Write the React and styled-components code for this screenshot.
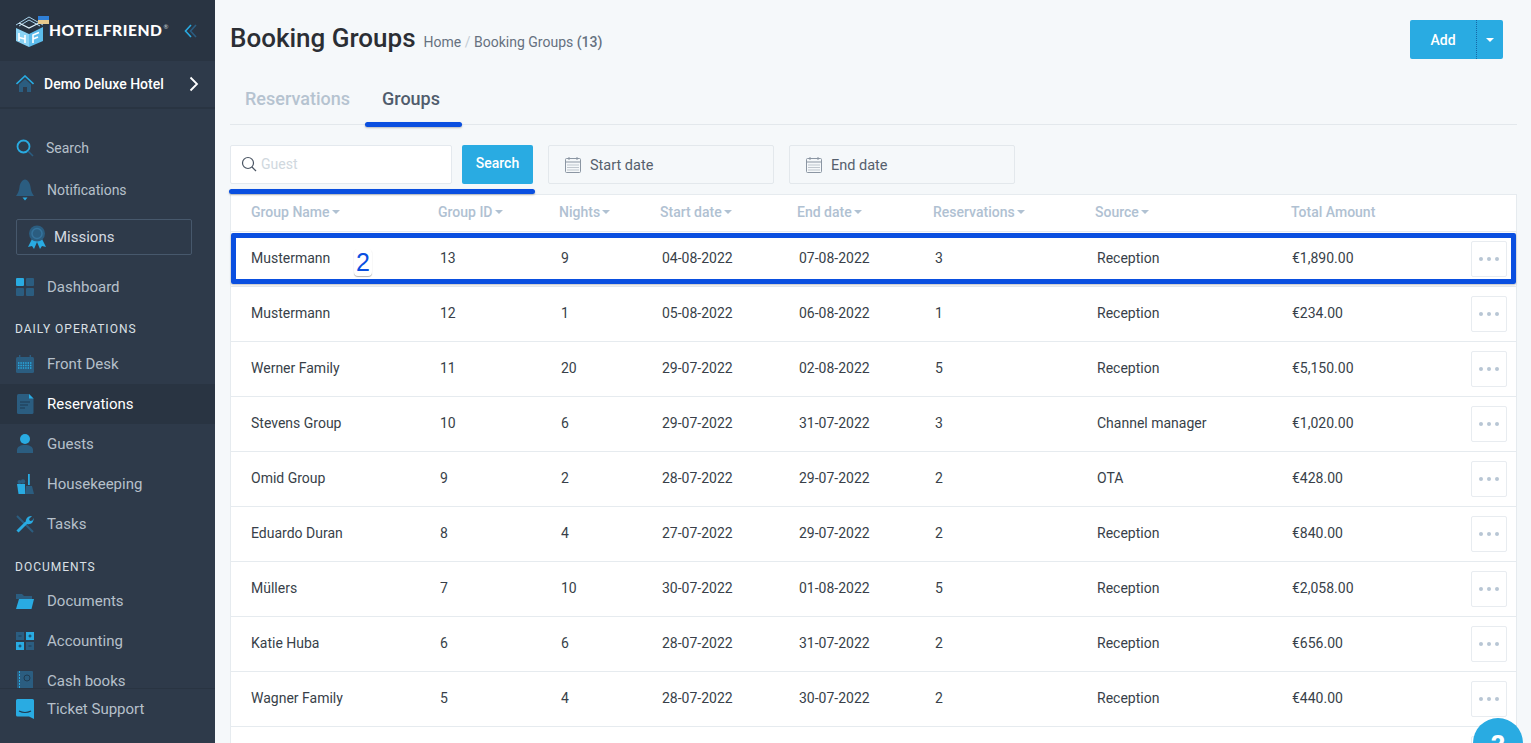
import React from 'react'
import styled, { createGlobalStyle } from 'styled-components'

const bright = '#29abe2'
const dim = '#2b5d80'

const GlobalStyle = createGlobalStyle`
    html, body {
        margin: 0;
        height: 743px;
        overflow: hidden;
        font-family: Roboto, 'Liberation Sans', sans-serif;
        background: #f5f8fa;
    }
    * { box-sizing: border-box; }
`

const Page = styled.div`
    display: flex;
    width: 1531px;
    height: 743px;
    overflow: hidden;
`

const Sidebar = styled.aside`
    width: 215px;
    flex: none;
    height: 743px;
    display: flex;
    flex-direction: column;
    background: #2e3a4a;
`

const LogoBar = styled.div`
    height: 61px;
    flex: none;
    display: flex;
    align-items: center;
    padding: 0 0 0 15px;
    background: #293442;
`

const LogoText = styled.div`
    margin-top: -2px;
    color: #fff;
    font-family: Lato, sans-serif;
    font-weight: 900;
    font-size: 15.6px;
    letter-spacing: 0.55px;
    sup { font-size: 6px; font-weight: 400; vertical-align: 7px; color: #c8d0d8; margin-left: 1px; line-height: 0; }
`

const Collapse = styled.div`
    margin-left: 15px;
    display: flex;
`

const HotelRow = styled.div`
    height: 48px;
    flex: none;
    display: flex;
    align-items: center;
    padding: 0 16px 0 16px;
    border-bottom: 2px solid #293442;
    color: #fff;
    font-size: 14px;
    font-weight: 500;
    span { margin-left: 10px; flex: 1; }
`

const Nav = styled.nav`
    flex: 1;
    min-height: 0;
    overflow: hidden;
    padding-top: 19px;
`

const NavItem = styled.div`
    height: 40px;
    display: flex;
    align-items: center;
    padding-left: 16px;
    gap: ${p => p.$gap || 13}px;
    margin-top: ${p => p.$mt || 0}px;
    font-size: ${p => p.$small ? 14 : 15}px;
    color: ${p => (p.$active ? '#ffffff' : '#b6c0ca')};
    background: ${p => (p.$active ? '#293442' : 'transparent')};
`

const IconSlot = styled.span`
    width: 18px;
    height: 20px;
    flex: none;
    display: flex;
    align-items: center;
    justify-content: center;
`

const MissionBox = styled.div`
    margin: 9px 23px 12px 16px;
    height: 36px;
    border: 1px solid #47586c;
    border-radius: 2px;
    display: flex;
    align-items: center;
    padding-left: 10px;
    gap: 7px;
    color: #d5dbe1;
    font-size: 15px;
`

const SectionLabel = styled.div`
    height: 37px;
    padding-top: ${p => p.$top}px;
    padding-left: 15px;
    color: #dbe0e6;
    font-size: 12px;
    line-height: 14px;
    letter-spacing: 1px;
    text-transform: uppercase;
`

const SideFooter = styled.div`
    height: 55px;
    flex: none;
    overflow: hidden;
    border-top: 1px solid #293442;
`

const Main = styled.main`
    flex: 1;
    min-width: 0;
    position: relative;
    padding: 0 14px 0 15px;
`

const TopBar = styled.div`
    height: 78px;
    display: flex;
    align-items: flex-start;
    padding-top: 20px;
`

const Title = styled.h1`
    margin: 0;
    font-size: 26px;
    line-height: 36px;
    font-weight: 500;
    color: #2b2e34;
`

const Crumbs = styled.div`
    margin-left: 8px;
    padding-top: 7px;
    font-size: 14px;
    line-height: 30px;
    color: #667180;
    i { font-style: normal; color: #c3ccd4; margin: 0 3.5px; }
    b { font-weight: 500; }
`

const AddGroup = styled.div`
    margin-left: auto;
    width: 93px;
    height: 39px;
    display: flex;
    background: ${bright};
    border-radius: 2px;
    color: #fff;
    font-size: 14px;
    font-weight: 500;
    margin-right: 14px;
`

const AddLabel = styled.div`
    width: 67px;
    display: flex;
    align-items: center;
    justify-content: center;
    border-right: 1px dotted #1668a8;
`

const AddCaret = styled.div`
    flex: 1;
    display: flex;
    align-items: center;
    justify-content: center;
`

const Caret = styled.span`
    display: inline-block;
    width: 0;
    height: 0;
    margin-left: ${p => p.$ml || 0}px;
    border-left: ${p => p.$size || 4}px solid transparent;
    border-right: ${p => p.$size || 4}px solid transparent;
    border-top: ${p => p.$size || 4}px solid ${p => p.$color || '#fff'};
`

const Tabs = styled.div`
    height: 47px;
    display: flex;
    gap: 32px;
    padding-left: 15px;
    border-bottom: 1px solid #e3e8ec;
`

const Tab = styled.div`
    font-size: 18px;
    font-weight: 500;
    line-height: 42px;
    color: ${p => (p.$active ? '#505c6c' : '#b5c3d0')};
`

const Filters = styled.div`
    display: flex;
    height: 39px;
    margin-top: 20px;
`

const SearchField = styled.div`
    width: 222px;
    display: flex;
    align-items: center;
    gap: 4px;
    padding: 0 0 2px 10px;
    background: #fff;
    border: 1px solid #e4e9ee;
    border-radius: 2px;
    color: #d0d8de;
    font-size: 14px;
`

const SearchButton = styled.div`
    width: 71px;
    margin-left: 10px;
    background: ${bright};
    border-radius: 2px;
    color: #fff;
    font-size: 14px;
    font-weight: 500;
    display: flex;
    align-items: center;
    justify-content: center;
    padding-bottom: 3px;
`

const DateField = styled.div`
    width: 226px;
    margin-left: ${p => p.$ml}px;
    display: flex;
    align-items: center;
    gap: 9px;
    padding: 1px 0 0 16px;
    border: 1px solid #e3e8ec;
    border-radius: 2px;
    color: #55606d;
    font-size: 14.5px;
`

const Table = styled.div`
    margin-top: 10px;
    background: #fff;
    border: 1px solid #e6ebef;
    border-bottom: none;
`

const gridColumns = '187px 121px 101px 137px 136px 162px 196px 1fr auto'

const HeadRow = styled.div`
    display: grid;
    grid-template-columns: ${gridColumns};
    height: 37px;
    align-items: center;
    padding-bottom: 3px;
    border-bottom: 1px solid #e6ebef;
    color: #b0c1d2;
    font-size: 14px;
    font-weight: 500;
`

const HeadCell = styled.div`
    padding-left: 20px;
    display: flex;
    align-items: center;
`

const Row = styled.div`
    display: grid;
    grid-template-columns: ${gridColumns};
    height: 55px;
    align-items: center;
    border-bottom: 1px solid #e6ebef;
    color: #383f49;
    font-size: 14px;
`

const Cell = styled.div`
    padding-left: ${p => p.$pad}px;
    padding-bottom: 2px;
`

const MoreButton = styled.div`
    grid-column: 9;
    margin-right: 9px;
    width: 36px;
    height: 36px;
    display: flex;
    align-items: center;
    justify-content: center;
    gap: 4px;
    border: 1px solid #e8ecf0;
    border-radius: 2px;
    span { width: 4px; height: 4px; border-radius: 50%; background: #b8c6d4; }
`

// blue marks somebody drew on top of the screenshot
const Mark = styled.div`
    position: absolute;
    left: ${p => p.$x}px;
    top: ${p => p.$y}px;
    width: ${p => p.$w}px;
    height: 5px;
    background: #0a4fe0;
    border-radius: 3px;
    box-shadow: 0 1px 2px rgba(0, 0, 0, 0.25);
`

const MarkBox = styled.div`
    position: absolute;
    left: 16px;
    top: 233px;
    width: 1285px;
    height: 51px;
    border: 5px solid #0a4fe0;
    border-radius: 2px;
    box-shadow: 0 1px 2px rgba(0, 0, 0, 0.25);
`

const MarkNumber = styled.div`
    position: absolute;
    left: 139px;
    top: 249px;
    width: 18px;
    height: 27px;
    text-align: center;
    font-family: 'Liberation Sans', sans-serif;
    font-size: 25px;
    line-height: 26px;
    color: #0a4fe0;
    background: #fff;
    border-radius: 4px;
    box-shadow: 0 1px 1px rgba(0, 0, 0, 0.3);
`

const HelpBubble = styled.div`
    position: absolute;
    left: 1258px;
    top: 718px;
    width: 50px;
    height: 50px;
    border-radius: 50%;
    background: ${bright};
    color: #fff;
    font-size: 28px;
    font-weight: 700;
    text-align: center;
    line-height: 56px;
`

const LogoIcon = () => (
    <svg width="34" height="34" viewBox="0 0 34 34">
        <path d="M1 11 L14 3 L28 11" fill="none" stroke="#a9d3ec" strokeWidth="1" />
        <path d="M4 12 L14 6 L25 12" fill="none" stroke="#a9d3ec" strokeWidth="1" />
        <path d="M1 14 L14 20 V33 L1 27 Z" fill="#8ad3f5" />
        <path d="M28 13 V27 L14 33 V20 Z" fill="#5cbcec" />
        <path d="M4 9 L14 14 L24 9" fill="none" stroke="#dff1fb" strokeWidth="1.2" />
        <path d="M4 19 V27 M10 21 V29 M4 23.5 L10 25" stroke="#fff" strokeWidth="1.6" fill="none" />
        <path d="M18 29 V21 L24 18.5 M18 25 L23 23" stroke="#fff" strokeWidth="1.6" fill="none" />
        <rect x="23" y="2" width="11" height="4" fill="#2f7fd6" />
        <rect x="23" y="6" width="11" height="4" fill="#e8c98c" />
    </svg>
)

const CollapseIcon = () => (
    <svg width="14" height="14" viewBox="0 0 14 14" fill="none" strokeWidth="1.6">
        <path d="M7 1 L1.5 7 L7 13" stroke={bright} />
        <path d="M12 1 L6.5 7 L12 13" stroke={dim} />
    </svg>
)

const HomeIcon = () => (
    <svg width="18" height="18" viewBox="0 0 18 18">
        <path d="M0.5 9 L9 1 L17.5 9" fill="none" stroke={bright} strokeWidth="1.6" />
        <path d="M3 9.5 L9 4 L15 9.5 V17 H11 V12 H7 V17 H3 Z" fill={dim} />
    </svg>
)

const ChevronIcon = () => (
    <svg width="10" height="16" viewBox="0 0 10 16">
        <path d="M1.5 1.5 L8 8 L1.5 14.5" fill="none" stroke="#fff" strokeWidth="1.8" />
    </svg>
)

const SearchIcon = () => (
    <svg width="18" height="18" viewBox="0 0 18 18" fill="none">
        <circle cx="7.5" cy="7.5" r="6" stroke={bright} strokeWidth="1.8" />
        <path d="M12 12 L17 17" stroke={dim} strokeWidth="1.6" />
    </svg>
)

const BellIcon = () => (
    <svg width="18" height="23" viewBox="0 0 18 23">
        <path d="M9 0.5 C6 1 4 4 3.5 8 C3 12 2 14 0 17 H18 C16 14 15 12 14.5 8 C14 4 12 1 9 0.5 Z" fill={dim} />
        <path d="M6.5 18.5 H11.5 L9 21.5 Z" fill={bright} />
    </svg>
)

const RibbonIcon = () => (
    <svg width="20" height="26" viewBox="0 0 20 26" fill="none">
        <path d="M5 15 L1 23 L5 22 L7 25 L10 18 L13 25 L15 22 L19 23 L15 15 Z" fill={bright} />
        <circle cx="10" cy="9.5" r="8" fill={dim} />
        <circle cx="10" cy="9.5" r="5" stroke="#35739c" strokeWidth="1.5" />
    </svg>
)

const DashboardIcon = () => (
    <svg width="18" height="18" viewBox="0 0 18 18">
        <rect width="8" height="8" rx="1" fill={bright} />
        <rect x="10" width="8" height="8" rx="1" fill={dim} />
        <rect y="10" width="8" height="8" rx="1" fill={dim} />
        <rect x="10" y="10" width="8" height="8" rx="1" fill={dim} />
    </svg>
)

const FrontDeskIcon = () => (
    <svg width="18" height="18" viewBox="0 0 18 18">
        <rect y="2" width="18" height="16" rx="1.5" fill={dim} />
        <rect x="3" width="1.4" height="4" fill={dim} />
        <rect x="13.6" width="1.4" height="4" fill={dim} />
        <path d="M2 8 H16 M2 10.5 H16 M2 13 H16" stroke={bright} strokeWidth="1.3" strokeDasharray="1.4 1" />
    </svg>
)

const ReservationIcon = () => (
    <svg width="17" height="20" viewBox="0 0 17 20">
        <path d="M1.5 0 H12 L16.5 4.5 V18.5 Q16.5 20 15 20 H1.5 Q0 20 0 18.5 V1.5 Q0 0 1.5 0 Z" fill={dim} />
        <path d="M12 0 L16.5 4.5 H12 Z" fill={bright} />
        <path d="M3 8 H13 M3 11 H11 M3 14 H8" stroke="#1f3b52" strokeWidth="1.2" />
    </svg>
)

const GuestIcon = () => (
    <svg width="16" height="20" viewBox="0 0 16 20">
        <circle cx="8" cy="5" r="5" fill={bright} />
        <path d="M0 19 V16 C0 13 3 11 8 11 C13 11 16 13 16 16 V19 Z" fill={dim} />
    </svg>
)

const BroomIcon = () => (
    <svg width="18" height="20" viewBox="0 0 18 20">
        <rect x="12" y="0" width="1.8" height="11" fill={bright} />
        <path d="M10 12 H16 L18 20 H9 Z" fill={dim} />
        <path d="M1 10 H9 V20 H2.5 Z" fill={bright} />
        <circle cx="3.5" cy="8" r="2" fill={dim} />
        <circle cx="7" cy="7.5" r="2.2" fill={dim} />
    </svg>
)

const WrenchIcon = () => (
    <svg width="18" height="18" viewBox="0 0 18 18" fill="none">
        <path d="M1 1 L17 17" stroke={dim} strokeWidth="2" />
        <path d="M1.5 16.5 L10.5 7.5" stroke={bright} strokeWidth="3" />
        <path d="M10 8 C9 4 12 0.5 16 1 L13 4 L14 6 L16.5 5.5 L17.5 3 C18 7 15 10 11 9 Z" fill={bright} />
    </svg>
)

const FolderIcon = () => (
    <svg width="18" height="17" viewBox="0 0 18 17">
        <path d="M0 1 H6 L8 3 H16 V6 H0 Z" fill={dim} />
        <path d="M3 6 H18 L15.5 16 H0 Z" fill={bright} />
    </svg>
)

const AccountingIcon = () => (
    <svg width="18" height="18" viewBox="0 0 18 18">
        <rect width="8" height="8" fill={dim} />
        <rect x="10" width="8" height="8" fill={bright} />
        <rect y="10" width="8" height="8" fill={bright} />
        <rect x="10" y="10" width="8" height="8" fill={dim} />
        <path d="M2.5 4 H5.5 M14 2.5 V5.5 M12.5 4 H15.5 M4 12.5 V15.5 M2.5 14 H5.5 M12.5 14 H15.5" stroke="#1f3b52" strokeWidth="1" />
    </svg>
)

const CashBookIcon = () => (
    <svg width="16" height="20" viewBox="0 0 16 20">
        <rect width="16" height="20" rx="1" fill={dim} />
        <path d="M2.5 0 V20" stroke={bright} strokeWidth="1" strokeDasharray="2 1" />
        <circle cx="10" cy="7" r="3" fill="none" stroke="#1f3b52" strokeWidth="1" />
    </svg>
)

const SupportIcon = () => (
    <svg width="18" height="20" viewBox="0 0 18 20">
        <path d="M1.5 0 H16.5 Q18 0 18 1.5 V20 L13 17.5 H1.5 Q0 17.5 0 16 V1.5 Q0 0 1.5 0 Z" fill={bright} />
        <path d="M3 12 Q9 15 15 12" fill="none" stroke="#1f3b52" strokeWidth="1.2" />
    </svg>
)

const LensIcon = () => (
    <svg width="16" height="16" viewBox="0 0 16 16" fill="none" stroke="#4a5563" strokeWidth="1.2">
        <circle cx="7" cy="7" r="5.5" />
        <path d="M11 11 L15 15" />
    </svg>
)

const CalendarIcon = () => (
    <svg width="16" height="16" viewBox="0 0 16 16" fill="none" stroke="#8b96a3" strokeWidth="1">
        <rect x="0.5" y="1.5" width="15" height="14" rx="1" />
        <path d="M0.5 5 H15.5 M4 0 V3 M12 0 V3" />
        <path d="M2.5 8 H13.5 M2.5 10.5 H13.5 M2.5 13 H13.5" strokeDasharray="1 1" />
    </svg>
)

const columns = ['Group Name', 'Group ID', 'Nights', 'Start date', 'End date', 'Reservations', 'Source']

// first and last cells sit a little left of the others
const cellPads = [20, 22, 22, 22, 22, 22, 22, 21]

const groups = [
    ['Mustermann', '13', '9', '04-08-2022', '07-08-2022', '3', 'Reception', '€1,890.00'],
    ['Mustermann', '12', '1', '05-08-2022', '06-08-2022', '1', 'Reception', '€234.00'],
    ['Werner Family', '11', '20', '29-07-2022', '02-08-2022', '5', 'Reception', '€5,150.00'],
    ['Stevens Group', '10', '6', '29-07-2022', '31-07-2022', '3', 'Channel manager', '€1,020.00'],
    ['Omid Group', '9', '2', '28-07-2022', '29-07-2022', '2', 'OTA', '€428.00'],
    ['Eduardo Duran', '8', '4', '27-07-2022', '29-07-2022', '2', 'Reception', '€840.00'],
    ['Müllers', '7', '10', '30-07-2022', '01-08-2022', '5', 'Reception', '€2,058.00'],
    ['Katie Huba', '6', '6', '28-07-2022', '31-07-2022', '2', 'Reception', '€656.00'],
    ['Wagner Family', '5', '4', '28-07-2022', '30-07-2022', '2', 'Reception', '€440.00'],
]

const SideLink = ({ icon, label, active, small, mt, gap }) => (
    <NavItem $active={active} $small={small} $mt={mt} $gap={gap}>
        <IconSlot>{icon}</IconSlot>
        {label}
    </NavItem>
)

const App = () => (
    <Page>
        <GlobalStyle />
        <Sidebar>
            <LogoBar>
                <LogoIcon />
                <LogoText>HOTELFRIEND<sup>®</sup></LogoText>
                <Collapse><CollapseIcon /></Collapse>
            </LogoBar>
            <HotelRow>
                <HomeIcon />
                <span>Demo Deluxe Hotel</span>
                <ChevronIcon />
            </HotelRow>
            <Nav>
                <SideLink icon={<SearchIcon />} label="Search" small gap={12} />
                <SideLink icon={<BellIcon />} label="Notifications" small mt={2} />
                <MissionBox><RibbonIcon />Missions</MissionBox>
                <SideLink icon={<DashboardIcon />} label="Dashboard" />
                <SectionLabel $top={15}>Daily operations</SectionLabel>
                <SideLink icon={<FrontDeskIcon />} label="Front Desk" />
                <SideLink icon={<ReservationIcon />} label="Reservations" active />
                <SideLink icon={<GuestIcon />} label="Guests" />
                <SideLink icon={<BroomIcon />} label="Housekeeping" />
                <SideLink icon={<WrenchIcon />} label="Tasks" />
                <SectionLabel $top={16}>Documents</SectionLabel>
                <SideLink icon={<FolderIcon />} label="Documents" />
                <SideLink icon={<AccountingIcon />} label="Accounting" />
                <SideLink icon={<CashBookIcon />} label="Cash books" />
            </Nav>
            <SideFooter>
                <SideLink icon={<SupportIcon />} label="Ticket Support" />
            </SideFooter>
        </Sidebar>
        <Main>
            <TopBar>
                <Title>Booking Groups</Title>
                <Crumbs>Home<i>/</i>Booking Groups <b>(13)</b></Crumbs>
                <AddGroup>
                    <AddLabel>Add</AddLabel>
                    <AddCaret><Caret /></AddCaret>
                </AddGroup>
            </TopBar>
            <Tabs>
                <Tab>Reservations</Tab>
                <Tab $active>Groups</Tab>
            </Tabs>
            <Filters>
                <SearchField><LensIcon />Guest</SearchField>
                <SearchButton>Search</SearchButton>
                <DateField $ml={15}><CalendarIcon />Start date</DateField>
                <DateField $ml={15}><CalendarIcon />End date</DateField>
            </Filters>
            <Table>
                <HeadRow>
                    {columns.map(name => (
                        <HeadCell key={name}>{name}<Caret $ml={2} $color="#b0c1d2" /></HeadCell>
                    ))}
                    <HeadCell>Total Amount</HeadCell>
                </HeadRow>
                {groups.map(group => (
                    <Row key={group[1]}>
                        {group.map((value, i) => (
                            <Cell key={i} $pad={cellPads[i]}>{value}</Cell>
                        ))}
                        <MoreButton><span /><span /><span /></MoreButton>
                    </Row>
                ))}
                <Row><MoreButton /></Row>
            </Table>
            <Mark $x={150} $y={122} $w={97} />
            <Mark $x={14} $y={189} $w={306} />
            <MarkBox />
            <MarkNumber>2</MarkNumber>
            <HelpBubble>?</HelpBubble>
        </Main>
    </Page>
)

export default App
